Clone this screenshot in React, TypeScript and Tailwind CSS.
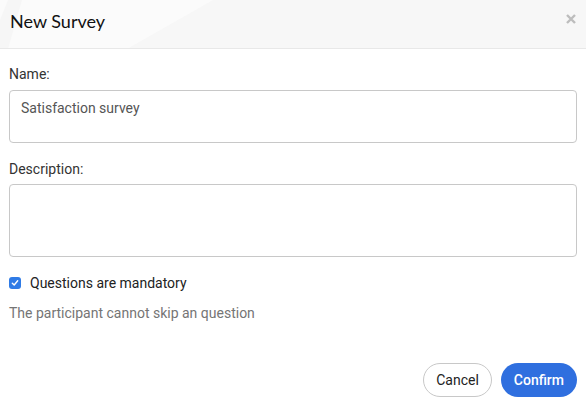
import React from "react";

export default function App() {
  return (
    <div className="w-[586px] h-[407px] bg-white flex flex-col" style={{ fontFamily: "Roboto, 'Liberation Sans', sans-serif" }}>
      <div className="relative h-[49px] bg-[#f7f7f7] border-b border-[#e8e8e8] flex items-center justify-between px-[10px] overflow-hidden">
        <svg className="absolute inset-0" width="586" height="49" viewBox="0 0 586 49">
          <polygon points="0,0 213,0 127,49 0,49" fill="#fbfbfb" />
          <polygon points="8,0 22,0 8,49 0,49 0,20" fill="#f6f6f6" />
        </svg>
        <h1 className="relative text-[18px] text-[#111] leading-none mb-[7px]" style={{ fontFamily: "Lato, 'Liberation Sans', sans-serif" }}>
          New Survey
        </h1>
        <svg className="relative mb-[10px]" width="10" height="10" viewBox="0 0 10 10">
          <path d="M1 1 L9 9 M9 1 L1 9" stroke="#bdbdbd" strokeWidth="2.4" strokeLinecap="butt" />
        </svg>
      </div>
      <div className="flex-1 flex flex-col px-[9px] pt-[15px]">
        <label className="text-[14px] leading-[20px] text-[#333]">Name:</label>
        <div className="mt-[6px] h-[53px] border border-[#c8c8c8] rounded-[4px] px-[11px] pt-[7px] text-[14px] leading-[20px] text-[#555]">
          Satisfaction survey
        </div>
        <label className="mt-[16px] text-[14px] leading-[20px] text-[#333]">Description:</label>
        <div className="mt-[5px] h-[73px] border border-[#c8c8c8] rounded-[4px]"></div>
        <div className="mt-[16px] flex items-center gap-[9px]">
          <span className="w-[12px] h-[12px] rounded-[3px] bg-[#2f7be6] flex items-center justify-center">
            <svg width="8" height="8" viewBox="0 0 8 8">
              <path d="M1.3 4.2 L3.2 6 L6.7 1.8" stroke="white" strokeWidth="1.4" fill="none" strokeLinecap="round" strokeLinejoin="round" />
            </svg>
          </span>
          <span className="text-[14px] leading-[20px] text-[#222]">Questions are mandatory</span>
        </div>
        <p className="mt-[10px] text-[14px] leading-[20px] text-[#757575]">The participant cannot skip an question</p>
        <div className="mt-auto mb-[10px] flex justify-end gap-[9px]">
          <button className="h-[34px] px-[12px] ml-[3px] rounded-full border border-[#c8c8c8] bg-white text-[14px] text-[#222]">Cancel</button>
          <button className="h-[34px] px-[13px] rounded-full bg-[#2f6fdf] text-[14px] font-medium text-white">Confirm</button>
        </div>
      </div>
    </div>
  );
}
